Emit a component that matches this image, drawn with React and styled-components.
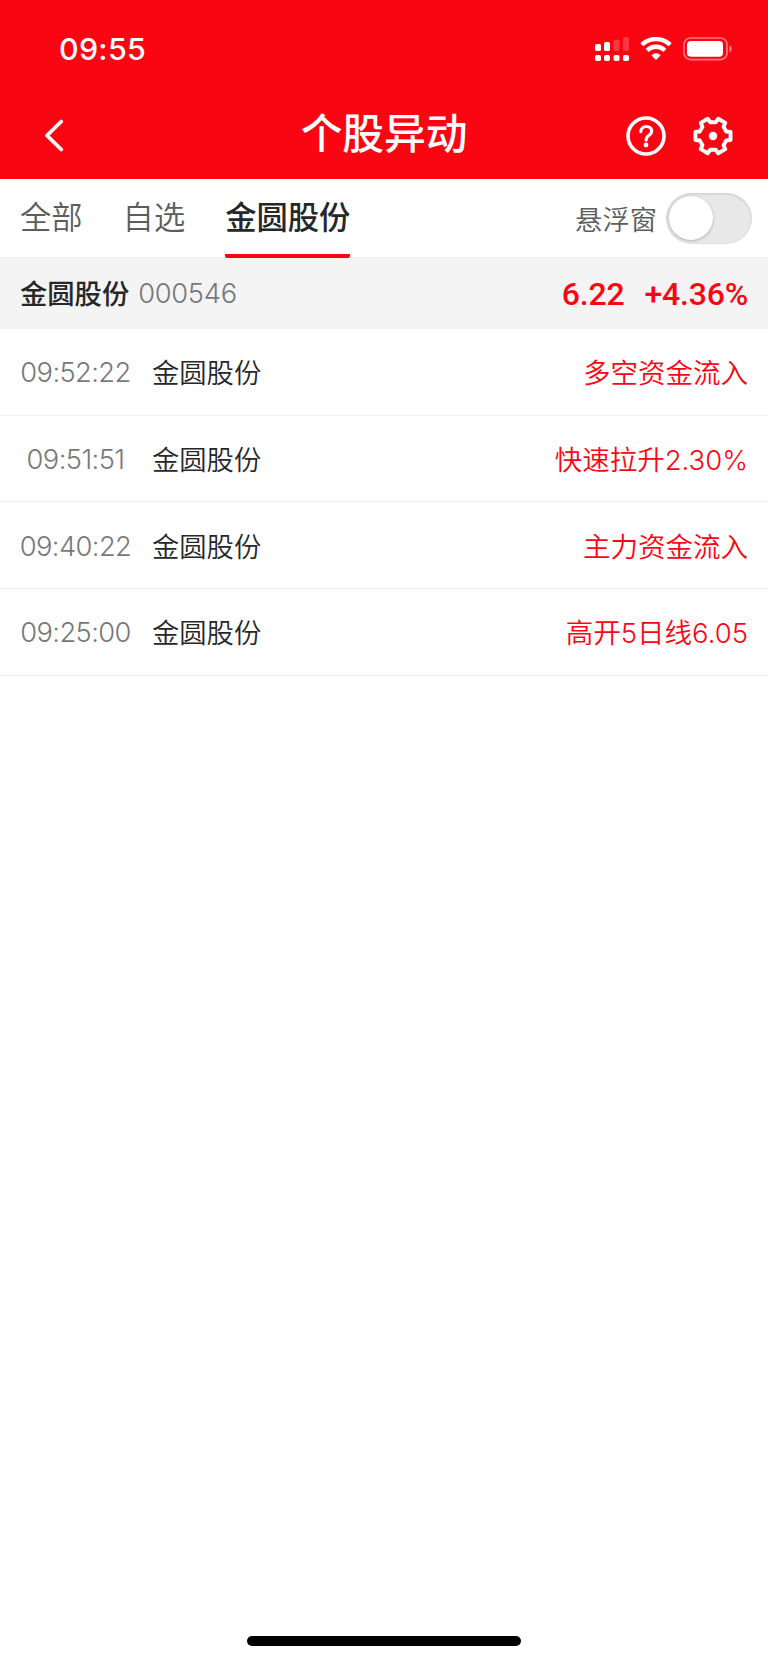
import { useState } from "react"
import styled, { createGlobalStyle } from "styled-components"

const alerts = [
  { time: "09:52:22", name: "金圆股份", event: "多空资金流入" },
  { time: "09:51:51", name: "金圆股份", event: "快速拉升2.30%" },
  { time: "09:40:22", name: "金圆股份", event: "主力资金流入" },
  { time: "09:25:00", name: "金圆股份", event: "高开5日线6.05" },
]

const tabs = ["全部", "自选", "金圆股份"]

// six teeth, four corners per 60 degree step
const gearPoints = [0, 60, 120, 180, 240, 300]
  .flatMap((base) =>
    [[-19, 14], [-13, 18], [13, 18], [19, 14]].map(([deg, r]) => {
      const a = ((base + deg) * Math.PI) / 180
      return `${(r * Math.cos(a)).toFixed(2)},${(r * Math.sin(a)).toFixed(2)}`
    })
  )
  .join(" ")

const SignalIcon = () => (
  <svg width="34" height="26" viewBox="0 0 34 26" fill="#fff">
    <rect x="0" y="7" width="6" height="7" rx="1.6" />
    <rect x="9" y="5" width="6" height="9" rx="1.6" />
    <rect x="18.5" y="2.5" width="6" height="11.5" rx="1.6" opacity="0.2" />
    <rect x="28" y="0" width="6" height="14" rx="1.6" opacity="0.2" />
    <rect x="0" y="18" width="6" height="6" rx="1.8" />
    <rect x="9" y="18" width="6" height="6" rx="1.8" />
    <rect x="18.5" y="18" width="6" height="6" rx="1.8" />
    <rect x="28" y="18" width="6" height="6" rx="1.8" />
  </svg>
)

const WifiIcon = () => (
  <svg width="32" height="24" viewBox="0 0 32 24" fill="none" stroke="#fff" strokeWidth="4.3">
    <path d="M1.8 7.8a20.3 20.3 0 0 1 28.4 0" />
    <path d="M7.1 13.4a12.7 12.7 0 0 1 17.8 0" />
    <path d="M16 23l-4.7-4.8a6.8 6.8 0 0 1 9.4 0z" fill="#fff" stroke="none" />
  </svg>
)

const BatteryIcon = () => (
  <svg width="50" height="24" viewBox="0 0 50 24">
    <rect x="1" y="1" width="43" height="21.6" rx="6.5" fill="none" stroke="#fff" strokeWidth="1.7" opacity="0.45" />
    <rect x="4" y="4" width="36" height="15.8" rx="3.8" fill="#fff" />
    <path d="M46.3 8.5c3.2 1 3.2 5.8 0 6.8z" fill="#fff" opacity="0.5" />
  </svg>
)

const App = () => {
  const [active, setActive] = useState(2)
  const [floating, setFloating] = useState(false)

  return (
    <Page>
      <GlobalStyle />
      <Header>
        <StatusBar>
          <Clock>09:55</Clock>
          <StatusIcons>
            <SignalIcon />
            <WifiIcon />
            <BatteryIcon />
          </StatusIcons>
        </StatusBar>
        <NavBar>
          <IconButton>
            <svg width="20" height="34" viewBox="0 0 20 34" fill="none" stroke="#fff" strokeWidth="3.8" strokeLinecap="round" strokeLinejoin="round">
              <path d="M17.2 2.5L3 16.5l14.2 14" />
            </svg>
          </IconButton>
          <Title>个股异动</Title>
          <NavActions>
            <IconButton>
              <svg width="40" height="40" viewBox="0 0 40 40" fill="none" stroke="#fff" strokeLinecap="round">
                <circle cx="20" cy="20" r="18" strokeWidth="3.6" />
                <path d="M14.8 15.6c.2-3.2 2.5-5.1 5.5-5.1 3.1 0 5.3 1.9 5.3 4.6 0 2.1-1.1 3.3-2.8 4.4-1.9 1.3-2.7 2.2-2.7 4.6" strokeWidth="3.2" />
                <circle cx="20" cy="29" r="2.4" fill="#fff" stroke="none" />
              </svg>
            </IconButton>
            <IconButton>
              <svg width="40" height="40" viewBox="-20 -20 40 40" fill="none" stroke="#fff">
                <polygon points={gearPoints} strokeWidth="3.9" strokeLinejoin="round" />
                <circle r="4.2" fill="#fff" stroke="none" />
              </svg>
            </IconButton>
          </NavActions>
        </NavBar>
      </Header>

      <TabBar>
        <Tabs>
          {tabs.map((tab, i) => (
            <Tab key={tab} $active={i === active} onClick={() => setActive(i)}>
              {tab}
            </Tab>
          ))}
        </Tabs>
        <FloatLabel>悬浮窗</FloatLabel>
        <Switch $on={floating} onClick={() => setFloating(!floating)}>
          <Knob />
        </Switch>
      </TabBar>

      <Quote>
        <QuoteName>金圆股份</QuoteName>
        <Code>000546</Code>
        <Price>6.22</Price>
        <Change>+4.36%</Change>
      </Quote>

      <List>
        {alerts.map((item) => (
          <Row key={item.time}>
            <Time>{item.time}</Time>
            <Name>{item.name}</Name>
            <Event>{item.event}</Event>
          </Row>
        ))}
      </List>

      <HomeIndicator />
    </Page>
  )
}

const GlobalStyle = createGlobalStyle`
  * {
    box-sizing: border-box;
  }
  body {
    margin: 0;
    background: #fff;
  }
  button {
    border: none;
    background: none;
    padding: 0;
    font: inherit;
    cursor: pointer;
  }
`

const Page = styled.div`
  display: flex;
  flex-direction: column;
  width: 768px;
  height: 1663px;
  background: #fff;
  color: #262729;
  font-family: Inter, "Noto Sans CJK SC", sans-serif;
  font-size: 27.3px;
  font-variant-ligatures: no-contextual;
  white-space: nowrap;
`

const Header = styled.header`
  height: 179px;
  background: #fa0613;
  color: #fff;
`

const StatusBar = styled.div`
  display: flex;
  justify-content: space-between;
  height: 93px;
  padding: 0 35px 0 59px;
`

const Clock = styled.div`
  padding-top: 30px;
  font-size: 30.4px;
  line-height: 38px;
  font-weight: 550;
  letter-spacing: 0.3px;
`

const StatusIcons = styled.div`
  display: flex;
  align-items: flex-start;
  gap: 11px;
  padding-top: 37px;
`

const NavBar = styled.nav`
  display: grid;
  grid-template-columns: 107px 1fr 107px;
  align-items: center;
  height: 86px;
  padding: 0 35px 0 44px;
`

const IconButton = styled.button`
  display: flex;
`

const Title = styled.h1`
  margin: -4px 0 0 -9px;
  text-align: center;
  font-size: 41.7px;
  line-height: 60px;
  font-weight: 500;
`

const NavActions = styled.div`
  display: flex;
  gap: 27px;
`

const TabBar = styled.div`
  display: flex;
  align-items: center;
  height: 79px;
  padding: 0 16px 0 20px;
  border-bottom: 1px solid #eee;
`

const Tabs = styled.div`
  display: flex;
  flex: 1;
  gap: 40px;
  height: 100%;
`

const Tab = styled.button`
  height: 79px;
  padding: 0 0 3px;
  border-bottom: 4px solid ${({ $active }) => ($active ? "#fa0613" : "transparent")};
  border-radius: 2px;
  color: ${({ $active }) => ($active ? "#262729" : "#5c5d5f")};
  font-size: 31.3px;
  font-weight: ${({ $active }) => ($active ? 500 : 350)};
`

const FloatLabel = styled.span`
  margin-right: 9px;
  color: #5c5d5f;
  font-weight: 350;
`

const Switch = styled.button`
  display: flex;
  align-items: center;
  justify-content: ${({ $on }) => ($on ? "flex-end" : "flex-start")};
  width: 86px;
  height: 51px;
  padding: 0 4px 0 3px;
  border-radius: 26px;
  background: ${({ $on }) => ($on ? "#fa0613" : "#e8e8e8")};
  box-shadow: inset 0 1px 3px rgba(0, 0, 0, 0.14);
`

const Knob = styled.span`
  width: 44px;
  height: 44px;
  border-radius: 50%;
  background: #fff;
  box-shadow: 0 1px 3px rgba(0, 0, 0, 0.25);
`

const Quote = styled.div`
  display: flex;
  align-items: center;
  height: 71px;
  padding: 0 20px 2px;
  background: #f4f4f4;
`

const QuoteName = styled.strong`
  padding-bottom: 1px;
  font-weight: 500;
`

const Code = styled.span`
  flex: 1;
  padding-top: 2px;
  margin-left: 9px;
  color: #77787a;
  font-weight: 300;
  letter-spacing: -0.3px;
`

const Price = styled.span`
  padding-top: 3px;
  color: #fa0613;
  font-family: Roboto, sans-serif;
  font-size: 32px;
  font-weight: 550;
  letter-spacing: -0.2px;
`

const Change = styled(Price)`
  margin-left: 20px;
`

const List = styled.div`
  flex: 1;
`

const Row = styled.div`
  display: flex;
  align-items: center;
  height: 86.7px;
  padding: 0 20px 0 19px;
  border-bottom: 1px solid #eee;
`

const Time = styled.span`
  width: 113px;
  padding-top: 2px;
  text-align: center;
  color: #77787a;
  font-weight: 300;
  letter-spacing: -0.6px;
`

const Name = styled.span`
  margin-left: 20px;
  padding-bottom: 1px;
  font-weight: 350;
`

const Event = styled.span`
  margin-left: auto;
  padding-bottom: 1px;
  color: #fa0613;
  font-size: 27.5px;
  font-weight: 350;
`

const HomeIndicator = styled.div`
  align-self: center;
  width: 274px;
  height: 10px;
  margin-bottom: 17px;
  border-radius: 5px;
  background: #000;
`

export default App
